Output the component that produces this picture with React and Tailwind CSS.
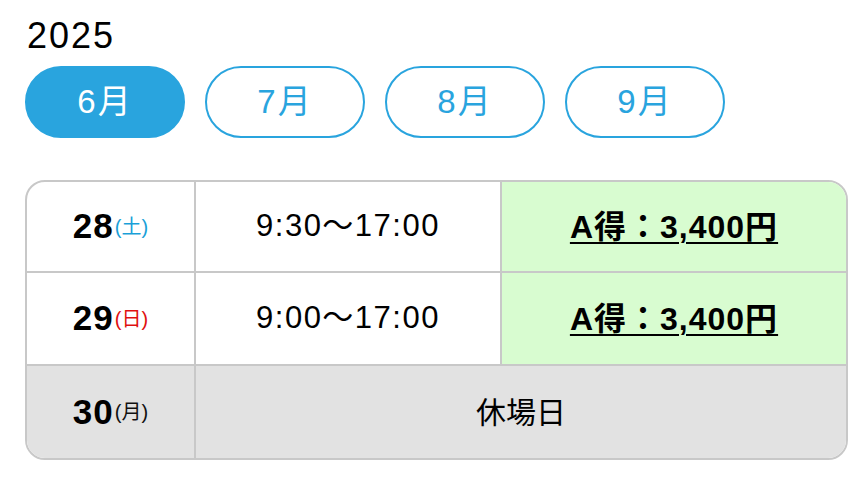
export default function App() {
  const months = ["6月", "7月", "8月", "9月"];
  return (
    <div className="w-[865px] h-[479px] bg-white text-black font-['Liberation_Sans','Noto_Sans_CJK_JP',sans-serif]">
      <div className="pl-[27px] pt-[16px]">
        <div className="text-[36px] leading-[40px] tracking-[2px]">2025</div>
      </div>
      <div className="flex gap-[20px] pl-[25px] mt-[10px]">
        {months.map((m, i) => (
          <div
            key={m}
            className={
              "w-[160px] h-[72px] rounded-full border-2 border-[#29a4de] flex items-center justify-center text-[33px] tracking-[2px] " +
              (i === 0 ? "bg-[#29a4de] text-white" : "bg-white text-[#29a4de]")
            }
          >
            {m}
          </div>
        ))}
      </div>
      <div className="ml-[25px] mt-[42px] w-[823px] rounded-[20px] border-2 border-[#c8c8c8] overflow-hidden grid grid-cols-[169px_306px_1fr]">
        <div className="h-[91px] border-r-2 border-b-2 border-[#c8c8c8] flex items-center justify-center">
          <span className="font-bold text-[35px] tracking-[1px]">28</span>
          <span className="text-[20px] text-[#1a9fd8] ml-[1px]">(土)</span>
        </div>
        <div className="h-[91px] border-r-2 border-b-2 border-[#c8c8c8] flex items-center justify-center text-[31px] tracking-[1.5px]">
          9:30〜17:00
        </div>
        <div className="h-[91px] border-b-2 border-[#c8c8c8] bg-[#d8fcd0] flex items-center justify-center">
          <span className="font-bold text-[32px] tracking-[1px] underline underline-offset-[4px] decoration-2">A得：3,400円</span>
        </div>

        <div className="h-[93px] border-r-2 border-b-2 border-[#c8c8c8] flex items-center justify-center">
          <span className="font-bold text-[35px] tracking-[1px]">29</span>
          <span className="text-[20px] text-[#e01010] ml-[1px]">(日)</span>
        </div>
        <div className="h-[93px] border-r-2 border-b-2 border-[#c8c8c8] flex items-center justify-center text-[31px] tracking-[1.5px]">
          9:00〜17:00
        </div>
        <div className="h-[93px] border-b-2 border-[#c8c8c8] bg-[#d8fcd0] flex items-center justify-center">
          <span className="font-bold text-[32px] tracking-[1px] underline underline-offset-[4px] decoration-2">A得：3,400円</span>
        </div>

        <div className="h-[92px] border-r-2 border-[#c8c8c8] bg-[#e2e2e2] flex items-center justify-center">
          <span className="font-bold text-[35px] tracking-[1px]">30</span>
          <span className="text-[20px] text-[#111] ml-[1px]">(月)</span>
        </div>
        <div className="col-span-2 h-[92px] bg-[#e2e2e2] flex items-center justify-center text-[30px]">
          休場日
        </div>
      </div>
    </div>
  );
}
